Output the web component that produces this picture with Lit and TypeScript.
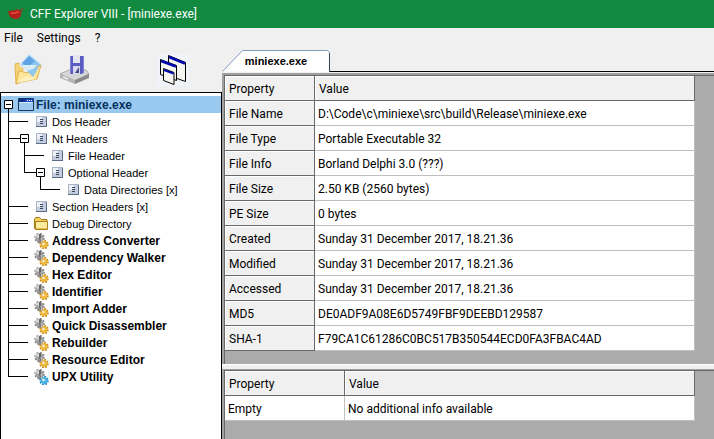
import { LitElement, html, svg, css } from "lit";
import { customElement, property, state } from "lit/decorators.js";
import { classMap } from "lit/directives/class-map.js";

type Guide = "pass" | "tee" | "end" | "stub" | "blank";
type IconName = "window" | "page" | "folder" | "gears" | "gearsBlue";

interface TreeRow {
  label: string;
  icon: IconName;
  guides: Guide[];
  expander?: boolean;
  bold?: boolean;
}

const tool = (label: string): TreeRow => ({ label, icon: "gears", guides: ["tee", "stub"], bold: true });

const ROWS: TreeRow[] = [
  { label: "File: miniexe.exe", icon: "window", guides: [], expander: true, bold: true },
  { label: "Dos Header", icon: "page", guides: ["tee", "stub"] },
  { label: "Nt Headers", icon: "page", guides: ["tee"], expander: true },
  { label: "File Header", icon: "page", guides: ["pass", "tee", "stub"] },
  { label: "Optional Header", icon: "page", guides: ["pass", "end"], expander: true },
  { label: "Data Directories [x]", icon: "page", guides: ["pass", "blank", "end", "stub"] },
  { label: "Section Headers [x]", icon: "page", guides: ["tee", "stub"] },
  { label: "Debug Directory", icon: "folder", guides: ["tee", "stub"] },
  tool("Address Converter"),
  tool("Dependency Walker"),
  tool("Hex Editor"),
  tool("Identifier"),
  tool("Import Adder"),
  tool("Quick Disassembler"),
  tool("Rebuilder"),
  tool("Resource Editor"),
  { label: "UPX Utility", icon: "gearsBlue", guides: ["end", "stub"], bold: true },
];

const FILE_INFO: [string, string][] = [
  ["File Name", "D:\\Code\\c\\miniexe\\src\\build\\Release\\miniexe.exe"],
  ["File Type", "Portable Executable 32"],
  ["File Info", "Borland Delphi 3.0 (???)"],
  ["File Size", "2.50 KB (2560 bytes)"],
  ["PE Size", "0 bytes"],
  ["Created", "Sunday 31 December 2017, 18.21.36"],
  ["Modified", "Sunday 31 December 2017, 18.21.36"],
  ["Accessed", "Sunday 31 December 2017, 18.21.36"],
  ["MD5", "DE0ADF9A08E6D5749FBF9DEEBD129587"],
  ["SHA-1", "F79CA1C61286C0BC517B350544ECD0FA3FBAC4AD"],
];

const guidePath: Record<Guide, string> = {
  pass: "M7.5 0V17",
  tee: "M7.5 0V17M7 8.5H16",
  end: "M7.5 0V9M7 8.5H16",
  stub: "M0 8.5H11",
  blank: "",
};

const guide = (g: Guide) => html`<svg class="guide" viewBox="0 0 16 17" aria-hidden="true">
  <path d=${guidePath[g]} fill="none" stroke="#000" />
</svg>`;

const gears = (front: string, rim: string) => svg`
  <circle cx="6.500" cy="5" r="4" fill="#a2a2a2" />
  <circle cx="6.500" cy="5" r="4.500" fill="none" stroke="#8a8a8a" stroke-width="1.500" stroke-dasharray="2 1.500" />
  <path d="M2 4q1-3 4-3v4z" fill="#d2d2d2" />
  <path d="M7 1v5l3 6" fill="none" stroke="#555" stroke-width="1.500" />
  <path d="M5 8l5 3" stroke="#888" stroke-width="2" />
  <circle cx="11" cy="11.500" r="3.500" fill=${front} />
  <circle cx="11" cy="11.500" r="4" fill="none" stroke=${rim} stroke-width="1.500" stroke-dasharray="1.800 1.300" />
  <circle cx="10.500" cy="11" r="1.200" fill="#f4f0e4" />
  <path d="M8 5l1 5" stroke="#b9b9b9" stroke-width="1.500" />`;

const icons: Record<IconName, unknown> = {
  window: svg`
    <path d="M.5 1.500h15v12h-15z" fill="#9cc9ef" stroke="#1c3a5c" />
    <path d="M1 2h14v3H1z" fill="#1a48c4" />
    <path d="M1 2h6v3H1z" fill="#0c2f86" />
    <path d="M9 3.500h1M11 3.500h1M13 3.500h1" stroke="#fff" />
    <path d="M1.500 5.500h13" stroke="#d8ecfb" />`,
  page: svg`
    <path d="M3.500 2.500h10v10h-10z" fill="#c4cddd" stroke="#a9b3c6" />
    <path d="M4 3h5v5H4z" fill="#eef1f7" />
    <path d="M3 12.500h11M13.500 3v10" stroke="#5c6b8a" />
    <path d="M7 5.500h3M7 7.500h3M7 9.500h3" stroke="#38465f" />`,
  folder: svg`
    <path d="M1.500 3.500l1-2h4l2 2h5.500v9h-12.500z" fill="#f3cf5b" stroke="#a27a1a" />
    <path d="M2.500 5.500h12v8h-12z" fill="#fdeb9d" stroke="#a9811f" />
    <path d="M3 12.500h11" stroke="#eac052" />`,
  gears: gears("#f0b93a", "#c98a14"),
  gearsBlue: gears("#49b6ea", "#1c83c0"),
};

@customElement("data-grid")
export class DataGrid extends LitElement {
  @property({ attribute: false }) rows: [string, string][] = [];
  @property({ type: Boolean, reflect: true }) plain = false;

  static styles = css`
    :host { display: block; background: #ababab; padding-right: 19px;
      border-top: 1px solid #696969; border-left: 1px solid #696969; }
    table { width: 100%; table-layout: fixed; border-collapse: separate; border-spacing: 0; }
    .name { width: 90px; }
    :host([plain]) .name { width: 120px; }
    th, td { box-sizing: border-box; height: 25px; padding: 2px 4px 0 3px; text-align: left;
      font-weight: 400; line-height: 16px; white-space: nowrap; overflow: hidden;
      background: #fff; border-right: 1px solid #c0c0c0; border-bottom: 1px solid #c0c0c0; }
    .fixed { background: #f0f0f0; padding-left: 4px; border-right-color: #696969;
      border-bottom-color: #696969; box-shadow: inset 1px 1px #fff; }
  `;

  render() {
    return html`<table>
      <colgroup><col class="name" /><col /></colgroup>
      <thead><tr><th class="fixed" scope="col">Property</th><th class="fixed" scope="col">Value</th></tr></thead>
      <tbody>
        ${this.rows.map(([name, value]) => html`<tr>
          <th class=${classMap({ fixed: !this.plain })} scope="row">${name}</th><td>${value}</td>
        </tr>`)}
      </tbody>
    </table>`;
  }
}

@customElement("nav-tree")
export class NavTree extends LitElement {
  @state() private selected = 0;

  static styles = css`
    :host { display: block; box-sizing: border-box; background: #fff; padding-top: 3px;
      border: solid #000; border-width: 1px 1px 0; font: 11px/17px "Liberation Sans", Arial, sans-serif; }
    ul { list-style: none; margin: 0; padding: 0; }
    .row { display: flex; height: 17px; align-items: center; white-space: nowrap; cursor: default; }
    .selected { background: #99c9ef; color: #06305c; }
    .bold { font-size: 12px; font-weight: 700; }
    .label { padding-top: 2px; }
    .guide { width: 16px; height: 17px; flex: none; }
    .toggle { width: 16px; height: 17px; flex: none; padding: 0; border: 0; background: none; }
    .toggle svg { display: block; width: 16px; height: 17px; }
    .icon { width: 16px; height: 16px; flex: none; margin-right: 3px; }
    .root .icon { margin: 0 2px 0 1px; }
  `;

  render() {
    return html`<ul role="tree" aria-label="File structure">
      ${ROWS.map((row, i) => html`<li
        role="treeitem"
        aria-level=${row.guides.length + 1}
        aria-selected=${i === this.selected}
        class=${classMap({ row: true, root: i === 0, bold: !!row.bold, selected: i === this.selected })}
        @click=${() => (this.selected = i)}
      >
        ${row.guides.map(guide)}
        ${row.expander ? html`<button class="toggle" aria-label="Collapse">
          <svg viewBox="0 0 16 17" aria-hidden="true">
            <path d=${i === 0 ? "M7.5 9V17" : "M0 8.5H4M7.5 9V17"} stroke="#000" />
            <path d="M3.500 4.500h8v8h-8z" fill="#fff" stroke="#000" />
            <path d="M5 8.500h5" stroke="#000" />
          </svg></button>` : null}
        <svg class="icon" viewBox="0 0 16 16" aria-hidden="true">${icons[row.icon]}</svg>
        <span class="label">${row.label}</span>
      </li>`)}
    </ul>`;
  }
}

@customElement("app-root")
export class AppRoot extends LitElement {
  static styles = css`
    :host { display: flex; flex-direction: column; height: 100vh; overflow: hidden;
      background: #f0f0f0; color: #000; font: 12px/16px Roboto, "Open Sans", sans-serif; }
    .title { display: flex; align-items: center; gap: 6px; height: 28px; flex: none; padding-left: 8px;
      background: #118a3f; color: #fff; }
    .title svg { width: 16px; height: 16px; }
    h1 { margin: 0; font: inherit; }
    .main { flex: 1; min-height: 0; display: grid; grid-template-columns: 222px minmax(0, 1fr); }
    .left, .right { display: flex; flex-direction: column; min-height: 0; }
    .menu { display: flex; height: 20px; gap: 14px; padding-left: 4px; }
    button { font: inherit; color: inherit; padding: 0; border: 0; background: none; }
    .tools { display: flex; height: 44px; align-items: center; padding-left: 12px; }
    .tools svg { display: block; width: 32px; height: 32px; }
    .tools button + button { margin-left: 14px; }
    .tools .cascade { margin-left: auto; margin-right: 33px; background: #f0f4f9; }
    nav-tree { flex: 1; min-height: 0; overflow: hidden; }
    .tabs { display: flex; align-items: flex-end; height: 44px; flex: none; }
    .tab { display: grid; width: 108px; height: 22px; }
    .tab > * { grid-area: 1 / 1; }
    .tab svg { width: 108px; height: 22px; }
    .tab span { padding-left: 16px; align-self: center; text-align: center;
      font: 700 11px/20px "Liberation Sans", Arial, sans-serif; padding-right: 16px; }
    .rule { flex: 1; border-bottom: 1px solid #000; }
    .pane { display: flex; border: solid #a0a0a0; border-width: 2px 0 0 2px; }
    .pane data-grid { flex: 1; min-width: 0; }
    .info { box-sizing: border-box; height: 291px; flex: none; margin-top: 1px; }
    .split { height: 4px; flex: none; border-top: 1px solid #fff; }
    .extra { flex: 1; border-top-width: 1px; }
  `;

  render() {
    return html`
      <header class="title">
        <svg viewBox="0 0 16 16" aria-hidden="true">
          <path d="M0 5C2 6 3 3.500 6 4.500C8 3 12 3 13 5C14 10 11 13 8 13C3 13 1 10 0 5z" fill="#b5201c" />
          <path d="M3 7c3 1 5-1 8-1" stroke="#e0503f" stroke-width="1.500" fill="none" />
          <path d="M12 6c2 1 1-3 3-4" stroke="#7a4a2c" stroke-width="1.500" fill="none" />
        </svg>
        <h1>CFF Explorer VIII - [miniexe.exe]</h1>
      </header>
      <div class="main">
        <div class="left">
          <nav class="menu" aria-label="Main menu">
            <button>File</button><button>Settings</button><button>?</button>
          </nav>
          <div class="tools" role="toolbar" aria-label="Tools">
            <button aria-label="Open">
              <svg viewBox="0 0 32 32">
                <path d="M3 10l3-1 3 2 3 1-5 17-3 1z" fill="#f5d273" stroke="#dfb556" />
                <path d="M17 0L30 11 22 21 8 11z" fill="#8cc3f1" stroke="#dcebf8" stroke-width="1.500" />
                <path d="M17 2l6 5-7 6-6-4z" fill="#5fa5e4" />
                <path d="M9 11h16l-6 7z" fill="#d9edfb" />
                <path d="M4 29l3-12 9 2 13-8-4 14z" fill="#ffe59a" stroke="#dfb24a" />
                <path d="M15 17l12-4-6 10z" fill="#8dc7ee" />
                <path d="M4 29l10-7 11 3z" fill="#fff0bd" />
              </svg>
            </button>
            <button aria-label="Save">
              <svg viewBox="0 0 32 32">
                <path d="M2 20l9-4h17l3 4-14 7z" fill="#d6d6d6" stroke="#aaa" />
                <path d="M2 20l15 6v4L2 24z" fill="#b4b4b4" />
                <path d="M17 26l14-6v4l-14 6z" fill="#8a8a8a" />
                <path d="M5 23l5 2" stroke="#eee" stroke-width="1.500" />
                <path d="M12 2h14v17l-3 1H12z" fill="#5a5cc0" />
                <path d="M15 1h7v8h-7z" fill="#e3e5f2" />
                <path d="M15 12h7v8h-7z" fill="#d6d9ee" />
                <path d="M17 19l4-6v6z" fill="#4a4a86" />
                <path d="M12.500 2v18M25.500 2v17" stroke="#8082dc" />
              </svg>
            </button>
            <button class="cascade" aria-label="Cascade windows">
              <svg viewBox="0 0 32 32">
                <path d="M11.500 1.500l17 7v19l-17-6z" fill="#f6f6f0" stroke="#000" />
                <path d="M12 3l16 6.500" stroke="#0008b0" stroke-width="2.500" />
                <path d="M3.500 5.500l16 6v15l-16-6z" fill="#f6f6f0" stroke="#000" />
                <path d="M4 7l15 5.500" stroke="#0008b0" stroke-width="2.500" />
                <path d="M6.500 14.500l10.500 4v12l-10.500-4z" fill="#f6f6f0" stroke="#000" />
                <path d="M7 16l9.500 3.500" stroke="#0008b0" stroke-width="2" />
              </svg>
            </button>
          </div>
          <nav-tree></nav-tree>
        </div>
        <div class="right">
          <div class="tabs" role="tablist">
            <button class="tab" role="tab" aria-selected="true">
              <svg viewBox="0 0 108 22" aria-hidden="true">
                <path d="M.5 21.500L19.500 1.500Q20 .5 22 .5H105.500L107.500 2.500V22" fill="#fff" stroke="#7f9db9" />
                <path d="M107.500 3V22" stroke="#33475c" />
              </svg>
              <span>miniexe.exe</span>
            </button>
            <div class="rule"></div>
          </div>
          <div class="pane info"><data-grid .rows=${FILE_INFO}></data-grid></div>
          <div class="split"></div>
          <div class="pane extra"><data-grid plain .rows=${[["Empty", "No additional info available"]]}></data-grid></div>
        </div>
      </div>
    `;
  }
}
